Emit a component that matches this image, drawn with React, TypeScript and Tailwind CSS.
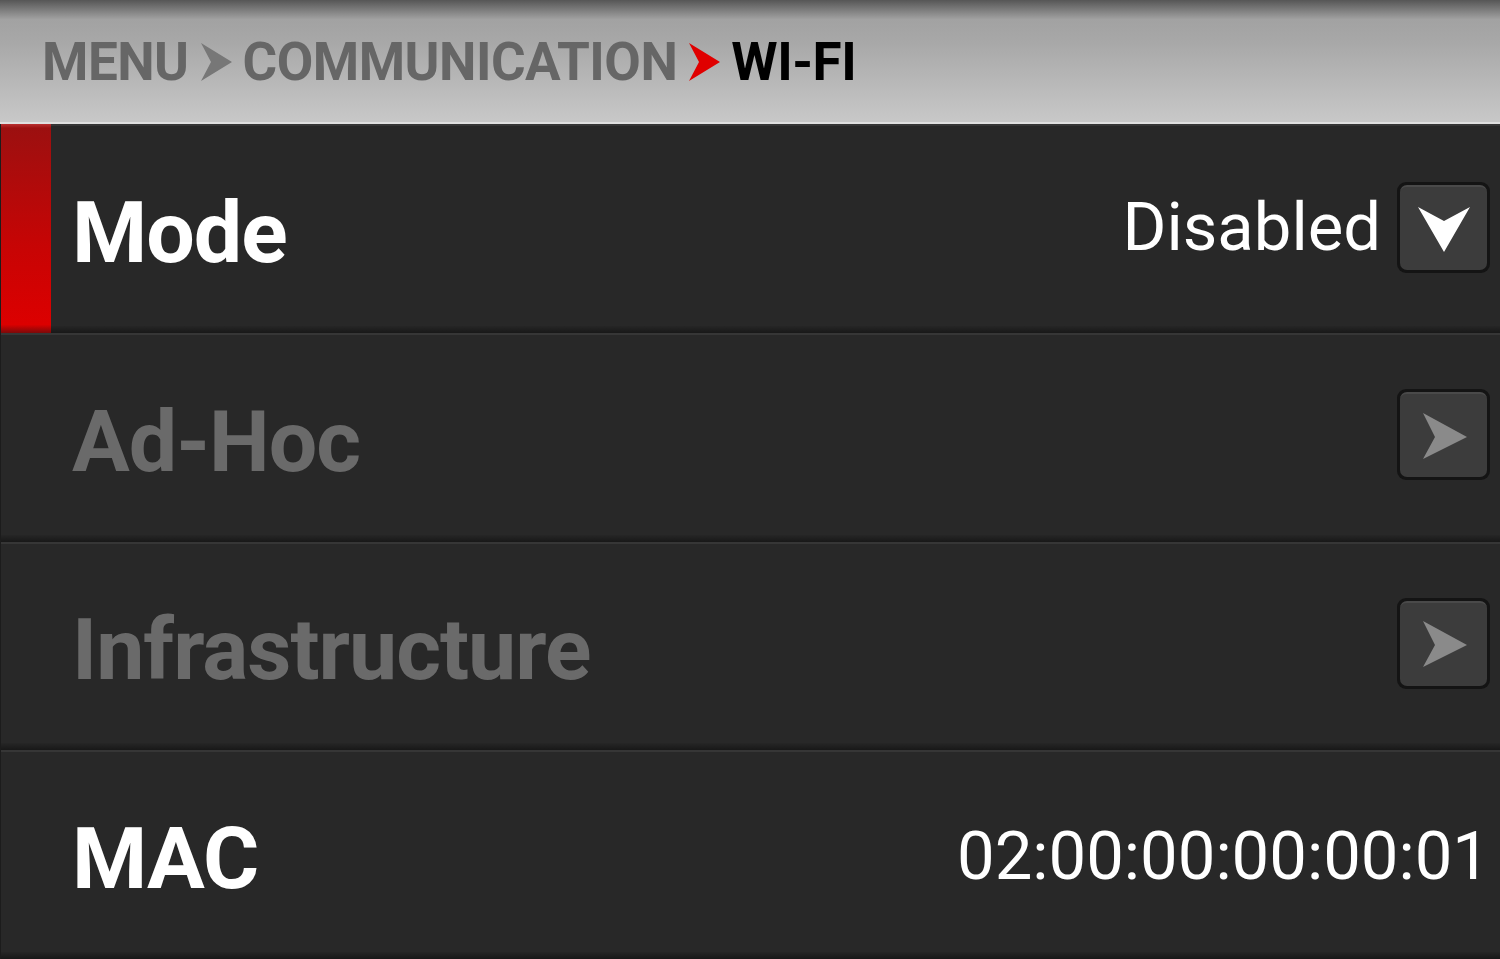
import React from 'react';

const Chevron = ({ color }: { color: string }) => (
  <svg width="34" height="40" viewBox="0 0 34 40" className="mx-[10px]">
    <path d="M2 1 L33 20 L2 39 L12 20 Z" fill={color} />
  </svg>
);

const ArrowButton = ({ dir }: { dir: 'down' | 'right' }) => (
  <div className="w-[93px] h-[91px] rounded-[9px] bg-[#141414] p-[3px] shrink-0">
    <div className="w-full h-full rounded-[7px] bg-[#3c3c3c] border-t-2 border-[#4a4a4a] flex items-center justify-center">
      {dir === 'down' ? (
        <svg width="56" height="50" viewBox="0 0 56 50">
          <path d="M2 3 L28 17 L54 3 L28 48 Z" fill="#ffffff" />
        </svg>
      ) : (
        <svg width="50" height="50" viewBox="0 0 50 50">
          <path d="M4 2 L48 26 L4 48 L16 26 Z" fill="#8a8a8a" />
        </svg>
      )}
    </div>
  </div>
);

const Row = ({
  active,
  label,
  dim,
  children,
}: {
  active?: boolean;
  label: string;
  dim?: boolean;
  children?: React.ReactNode;
}) => (
  <div className="flex-1 flex bg-[#282828] border-l border-[#1c1c1c]">
    <div
      className={`w-[50px] shrink-0 ${
        active
          ? 'bg-[linear-gradient(to_bottom,#b83030_0%,#9c1010_2%,#c80404_60%,#dc0000_96%,#7a0a0a_100%)]'
          : 'flex flex-col'
      }`}
    >
      {!active && (
        <>
          <div className="h-[2px] bg-[#363636]" />
          <div className="flex-1" />
          <div className="h-[7px] bg-gradient-to-b from-[#262626] to-[#181818]" />
        </>
      )}
    </div>
    <div className="flex-1 flex flex-col">
      <div className="h-[2px] bg-[#363636]" />
      <div className="flex-1 flex items-center justify-between pl-[21px] pr-[10px] pt-[14px]">
        <span className={`text-[86px] font-bold leading-none tracking-[-1px] ${dim ? 'text-[#6a6a6a]' : 'text-white'}`}>
          {label}
        </span>
        <div className="flex items-center gap-[16px]">{children}</div>
      </div>
      <div className="h-[7px] bg-gradient-to-b from-[#262626] to-[#181818]" />
    </div>
  </div>
);

export default function App() {
  return (
    <div className="w-[1500px] h-[959px] flex flex-col bg-[#1e1e1e] overflow-hidden font-['Roboto',sans-serif]">
      {/* Breadcrumb */}
      <div className="h-[124px] shrink-0 bg-[linear-gradient(to_bottom,#565656_0%,#a2a2a2_16%,#a8a8a8_35%,#c8c8c8_100%)] border-b-2 border-[#e0e0e0] flex items-center pl-[42px] pt-[2px]">
        <span className="text-[53px] font-bold text-[#666666] tracking-[-0.5px] leading-none">MENU</span>
        <Chevron color="#777777" />
        <span className="text-[53px] font-bold text-[#666666] tracking-[-0.5px] leading-none">COMMUNICATION</span>
        <Chevron color="#e00000" />
        <span className="text-[53px] font-bold text-black tracking-[-0.5px] leading-none">WI-FI</span>
      </div>

      <Row active label="Mode">
        <span className="text-[67px] text-white leading-none -mt-[10px]">Disabled</span>
        <div className="-mt-[10px]">
          <ArrowButton dir="down" />
        </div>
      </Row>
      <Row label="Ad-Hoc" dim>
        <div className="-mt-[14px]">
          <ArrowButton dir="right" />
        </div>
      </Row>
      <Row label="Infrastructure" dim>
        <div className="-mt-[14px]">
          <ArrowButton dir="right" />
        </div>
      </Row>
      <Row label="MAC">
        <span className="text-[67px] text-white leading-none -mt-[6px]">02:00:00:00:00:01</span>
      </Row>
    </div>
  );
}
